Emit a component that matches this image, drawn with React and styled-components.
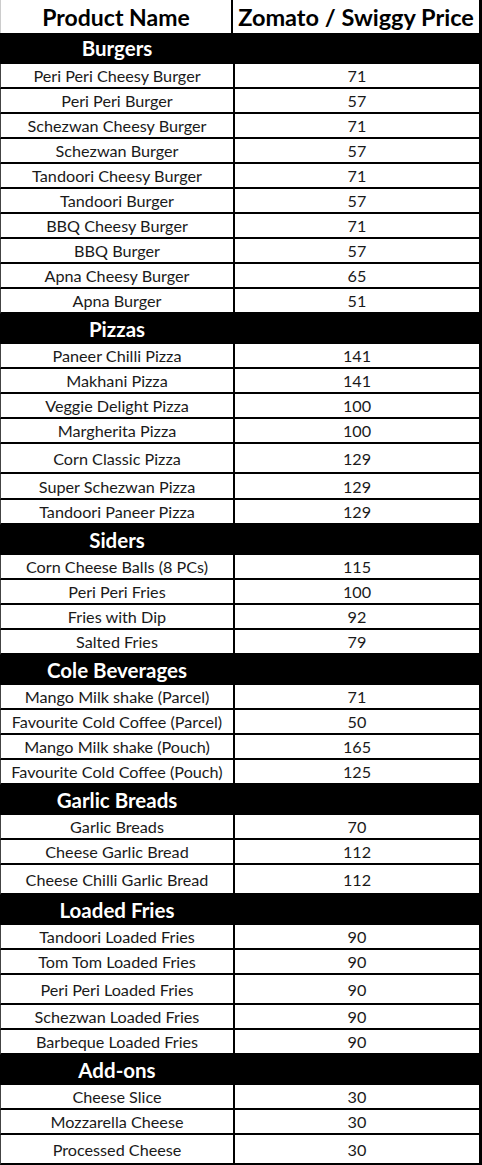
import React from "react";
import styled, { createGlobalStyle } from "styled-components";

const Global = createGlobalStyle`
  html, body { margin: 0; padding: 0; background: #fff; }
  body { font-family: Lato, "Open Sans", sans-serif; color: #111; }
`;

const Sheet = styled.div`
  width: 482px;
  height: 1165px;
  display: flex;
  flex-direction: column;
  overflow: hidden;
  background: #fff;
`;

const HeaderRow = styled.div`
  display: flex;
  height: 33px;
  border-right: 3px solid #000;
  border-left: 1px solid #ccc;
  box-sizing: border-box;
`;

const HeaderCell = styled.div`
  display: flex;
  align-items: center;
  justify-content: center;
  font-weight: 700;
  font-size: 23px;
  letter-spacing: 0;
  color: #000;
  box-sizing: border-box;
  white-space: nowrap;
  ${(p) => (p.$left ? "width: 232px; border-right: 2px solid #000;" : "flex: 1; font-size: 23.5px;")}
`;

const SectionRow = styled.div`
  display: flex;
  height: ${(p) => p.$h}px;
  background: #000;
  box-sizing: border-box;
`;

const SectionTitle = styled.div`
  width: 234px;
  display: flex;
  align-items: center;
  justify-content: center;
  color: #fff;
  font-weight: 700;
  font-size: 20.5px;
  padding-bottom: 1px;
`;

const ItemRow = styled.div`
  display: flex;
  height: ${(p) => p.$h}px;
  border-bottom: 2px solid #000;
  border-left: 1px solid #444;
  border-right: 3px solid #000;
  box-sizing: border-box;
`;

const NameCell = styled.div`
  width: 232px;
  border-right: 2px solid #000;
  display: flex;
  align-items: center;
  justify-content: center;
  font-size: 16.2px;
  color: #1a1a1a;
  white-space: nowrap;
`;

const PriceCell = styled.div`
  flex: 1;
  display: flex;
  align-items: center;
  justify-content: center;
  font-size: 16.2px;
  color: #1a1a1a;
`;

const sections = [
  {
    title: "Burgers",
    h: 31,
    items: [
      ["Peri Peri Cheesy Burger", 71, 25],
      ["Peri Peri Burger", 57, 25],
      ["Schezwan Cheesy Burger", 71, 25],
      ["Schezwan Burger", 57, 25],
      ["Tandoori Cheesy Burger", 71, 25],
      ["Tandoori Burger", 57, 25],
      ["BBQ Cheesy Burger", 71, 25],
      ["BBQ Burger", 57, 25],
      ["Apna Cheesy Burger", 65, 25],
      ["Apna Burger", 51, 25],
    ],
  },
  {
    title: "Pizzas",
    h: 30,
    items: [
      ["Paneer Chilli Pizza", 141, 25],
      ["Makhani Pizza", 141, 25],
      ["Veggie Delight Pizza", 100, 25],
      ["Margherita Pizza", 100, 25],
      ["Corn Classic Pizza", 129, 30],
      ["Super Schezwan Pizza", 129, 26],
      ["Tandoori Paneer Pizza", 129, 25],
    ],
  },
  {
    title: "Siders",
    h: 30,
    items: [
      ["Corn Cheese Balls (8 PCs)", 115, 25],
      ["Peri Peri Fries", 100, 25],
      ["Fries with Dip", 92, 25],
      ["Salted Fries", 79, 25],
    ],
  },
  {
    title: "Cole Beverages",
    h: 30,
    items: [
      ["Mango Milk shake (Parcel)", 71, 25],
      ["Favourite Cold Coffee (Parcel)", 50, 25],
      ["Mango Milk shake (Pouch)", 165, 25],
      ["Favourite Cold Coffee (Pouch)", 125, 25],
    ],
  },
  {
    title: "Garlic Breads",
    h: 30,
    items: [
      ["Garlic Breads", 70, 25],
      ["Cheese Garlic Bread", 112, 25],
      ["Cheese Chilli Garlic Bread", 112, 30],
    ],
  },
  {
    title: "Loaded Fries",
    h: 30,
    items: [
      ["Tandoori Loaded Fries", 90, 25],
      ["Tom Tom Loaded Fries", 90, 25],
      ["Peri Peri Loaded Fries", 90, 30],
      ["Schezwan Loaded Fries", 90, 25],
      ["Barbeque Loaded Fries", 90, 25],
    ],
  },
  {
    title: "Add-ons",
    h: 30,
    items: [
      ["Cheese Slice", 30, 25],
      ["Mozzarella Cheese", 30, 25],
      ["Processed Cheese", 30, 30],
    ],
  },
];

export default function App() {
  return (
    <>
      <Global />
      <Sheet>
        <HeaderRow>
          <HeaderCell $left>Product Name</HeaderCell>
          <HeaderCell>Zomato / Swiggy Price</HeaderCell>
        </HeaderRow>
        {sections.map((s) => (
          <React.Fragment key={s.title}>
            <SectionRow $h={s.h}>
              <SectionTitle>{s.title}</SectionTitle>
            </SectionRow>
            {s.items.map(([name, price, h]) => (
              <ItemRow key={name} $h={h}>
                <NameCell>{name}</NameCell>
                <PriceCell>{price}</PriceCell>
              </ItemRow>
            ))}
          </React.Fragment>
        ))}
      </Sheet>
    </>
  );
}
